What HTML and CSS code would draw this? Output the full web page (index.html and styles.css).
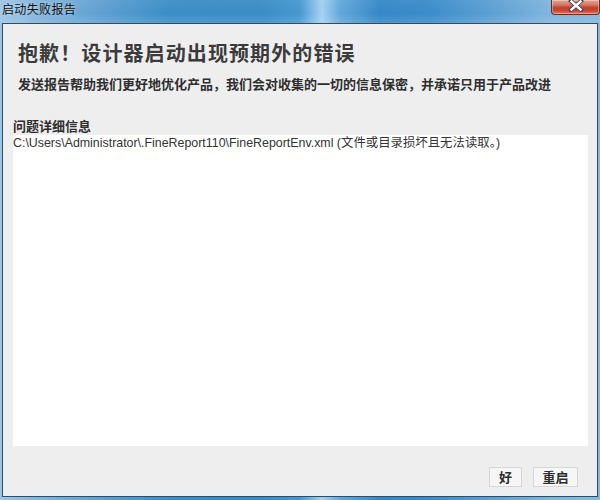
FILE: index.html
```html
<!DOCTYPE html>
<html lang="zh-CN">
<head>
<meta charset="utf-8">
<title>启动失败报告</title>
<link rel="stylesheet" href="styles.css">
</head>
<body>
<div class="window">
  <div class="titlebar">
    <span class="title">启动失败报告</span>
    <div class="close">
      <svg width="16" height="12" viewBox="0 0 16 12">
        <path d="M3 1 L13 10 M13 1 L3 10" stroke="#4a4a4a" stroke-width="4.2" stroke-linecap="square"/>
        <path d="M3.5 1.5 L12.5 9.5 M12.5 1.5 L3.5 9.5" stroke="#ffffff" stroke-width="2.4" stroke-linecap="square"/>
      </svg>
    </div>
  </div>
  <div class="frame">
    <div class="client">
      <div class="header">
        <h1 class="headline">抱歉！设计器启动出现预期外的错误</h1>
        <p class="subline">发送报告帮助我们更好地优化产品，我们会对收集的一切的信息保密，并承诺只用于产品改进</p>
      </div>
      <div class="details">
        <div class="label">问题详细信息</div>
        <div class="textarea">C:\Users\Administrator\.FineReport110\FineReportEnv.xml (文件或目录损坏且无法读取。)</div>
      </div>
      <div class="footer">
        <button class="btn btn-ok">好</button>
        <button class="btn btn-restart">重启</button>
      </div>
    </div>
  </div>
</div>
</body>
</html>
```

FILE: styles.css
```css
html, body {
  margin: 0;
  padding: 0;
}
body {
  width: 600px;
  height: 500px;
  overflow: hidden;
  background: #8fbde0;
  font-family: "Noto Sans CJK SC", "Liberation Sans", sans-serif;
}
.window {
  width: 600px;
  height: 500px;
  display: flex;
  flex-direction: column;
  background: linear-gradient(90deg, #9cc6e6 0px, #7fb3dc 40px, #5a9dd0 110px, #3b8dc7 170px, #3a8cc6 260px, #4598d0 300px, #a6d0f1 322px, #62a8da 340px, #3587c7 380px, #3b8cca 430px, #5c9fd3 490px, #7fb5de 550px, #84b8df 600px);
}
.titlebar {
  height: 23px;
  display: flex;
  align-items: flex-start;
  padding-left: 2px;
  box-sizing: border-box;
  background: linear-gradient(180deg, rgba(255,255,255,0.05) 0%, rgba(255,255,255,0) 60%, rgba(255,255,255,0.12) 100%);
}
.title {
  font-size: 12px;
  line-height: 18px;
  letter-spacing: 0.35px;
  color: #111;
  text-shadow: 0 0 4px rgba(255,255,255,0.6);
}
.close {
  margin-left: auto;
  width: 49px;
  height: 15px;
  box-sizing: border-box;
  border: 1px solid #6a2a22;
  border-top: none;
  border-radius: 0 0 4px 4px;
  background: linear-gradient(180deg, #e3a392 0%, #d67763 35%, #c3402b 55%, #c4472f 75%, #d77e66 100%);
  box-shadow: inset 0 0 0 1px rgba(255,255,255,0.35);
  display: flex;
  justify-content: center;
  align-items: flex-start;
}
.close svg {
  display: block;
  margin-left: 1px;
}
.frame {
  flex: 1;
  padding: 0 2px 3px 2px;
  display: flex;
}
.client {
  flex: 1;
  border: 1px solid #2e4e66;
  background: #eeeeee;
  display: flex;
  flex-direction: column;
  padding: 0 9px 0 10px;
}
.header {
  padding: 17px 0 0 5px;
}
.headline {
  margin: 0;
  font-size: 20px;
  line-height: 24px;
  font-weight: 700;
  letter-spacing: 1.1px;
  color: #3b3b3b;
}
.subline {
  margin: 11px 0 0 0;
  font-size: 13px;
  line-height: 16px;
  font-weight: 700;
  color: #2e2e2e;
}
.details {
  margin-top: 26px;
  display: flex;
  flex-direction: column;
}
.label {
  font-size: 13px;
  line-height: 16px;
  font-weight: 700;
  color: #2e2e2e;
}
.textarea {
  margin-top: 1px;
  height: 311px;
  box-sizing: border-box;
  background: #ffffff;
  padding: 1px 0 0 0;
  font-family: "Liberation Sans", "Noto Sans CJK SC", sans-serif;
  font-size: 12.4px;
  line-height: 15px;
  color: #333333;
}
.footer {
  margin-top: 21px;
  display: flex;
  justify-content: flex-end;
  gap: 11px;
  padding-right: 10px;
}
.btn {
  height: 20px;
  box-sizing: border-box;
  border: 1px solid #d6d6d6;
  background: #f6f6f6;
  font-family: "Noto Sans CJK SC", sans-serif;
  font-size: 13px;
  font-weight: 700;
  line-height: 16px;
  color: #2e2e2e;
  padding: 0;
  margin: 0;
}
.btn-ok {
  width: 33px;
}
.btn-restart {
  width: 45px;
}
```
